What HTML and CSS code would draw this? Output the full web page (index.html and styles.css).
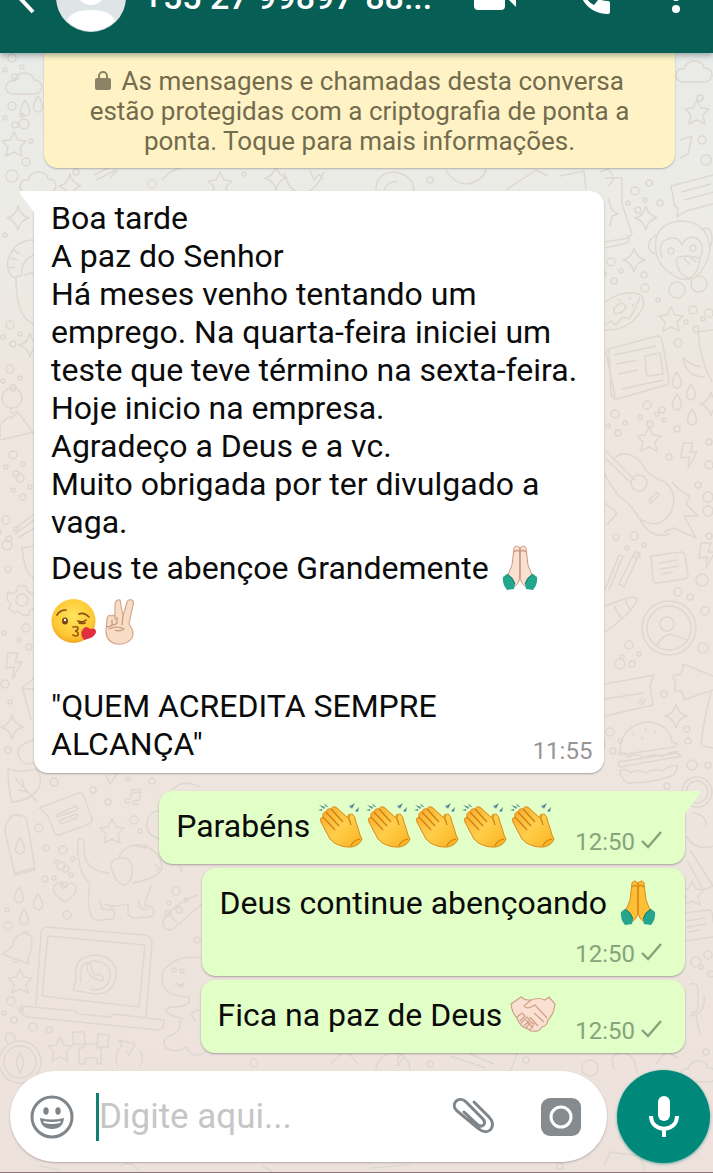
FILE: index.html
```html
<!DOCTYPE html>
<html lang="pt-BR">
<head>
<meta charset="UTF-8">
<meta name="viewport" content="width=device-width, initial-scale=1.0">
<title>Conversa</title>
<link rel="stylesheet" href="styles.css">
</head>
<body>
    <!-- Papel de parede -->
    <svg class="wallpaper" viewBox="0 0 713 1173" preserveAspectRatio="xMidYMid slice" aria-hidden="true">
        <defs>
            <path id="star" d="M0-12l4 8 8 1-6 6 2 9-8-4-8 4 2-9-6-6 8-1z"/>
            <path id="spark" d="M0-12q2 9 11 12q-9 2-11 12q-2-9-11-12q9-2 11-12z"/>
            <path id="cloud" d="M-12 10q-7-2-6-8q2-6 8-5q3-9 12-8q7 1 8 7q8 0 8 8q-2 6-8 6z"/>
            <path id="drop" d="M0-8q9 14 0 16q-9-2 0-16z"/>
            <path id="heart" d="M0 10q-14-9-11-16q6-7 11 1q6-7 11-1q2 8-11 16z"/>
            <path id="bolt" d="M-5-13l10 0-3 9 7 0-9 16 1-11-8 1z"/>
            <path id="note" d="M-17-12l30-4q3 0 4 3l3 20q0 3-3 4l-28 4q-4 0-4-4zM-9-5l19-3M-8 1l19-3M-7 6l12-2"/>
            <g id="dots"><circle r="4"/><circle cx="10" cy="9" r="2"/><circle cx="-7" cy="12" r="2"/><circle cx="3" cy="19" r="3"/></g>
            <path id="chat" d="M-26-10l46-12q6 0 7 5l4 17q0 4-4 5l-38 10-9 6 1-9q-4-1-4-6zM-16-4l30-8M-13 4l30-8"/>
        </defs>
        <!-- lado esquerdo -->
        <use href="#dots" x="12" y="58"/><use href="#cloud" x="24" y="84"/>
        <use href="#dots" x="12" y="106"/><use href="#drop" x="25" y="108"/><use href="#drop" x="38" y="104"/>
        <use href="#star" x="14" y="144"/><circle cx="31" cy="141" r="2"/><circle cx="24" cy="124" r="5"/>
        <circle cx="12" cy="176" r="6"/><circle cx="26" cy="162" r="4"/><use href="#cloud" x="38" y="183"/>
        <use href="#spark" x="70" y="186"/><use href="#spark" x="18" y="218"/><circle cx="5" cy="235" r="2"/>
        <path d="M34 240q-20 0-26 20q-2 12 6 18l8-3q-2-14 12-20M10 258l8 2M13 250l7 4M8 268l7-1M16 278q0 40 18 46M24 275q10-4 10 0"/>
        <use href="#dots" x="10" y="325"/><use href="#spark" x="30" y="345"/><use href="#dots" x="10" y="369"/>
        <circle cx="12" cy="398" r="10"/><path d="M0 440l0-14q8-12 12-8l6-6 16 22M0 440l34-8M10 408l2 6 5-4"/>
        <use href="#dots" x="13" y="455"/><use href="#dots" x="20" y="478"/><use href="#dots" x="6" y="520"/>
        <path d="M16 528l18-14M15 534l19-14M18 538l16-10M22 548l12-2M22 546q2 28 12 32"/>
        <circle cx="7" cy="545" r="5"/><circle cx="8" cy="569" r="3"/>
        <circle cx="22" cy="600" r="6"/><path d="M18 586h8l1 5 5 3 2 0M18 586l-1 5-5 3-4-2-1 8 4 3-2 6 6 4 3-2 4 4h7l1-5 4-1"/>
        <use href="#dots" x="26" y="628"/><circle cx="4" cy="633" r="2"/><use href="#bolt" x="13" y="666"/>
        <path d="M34 678l-13 11 13 0M23 690l8 30"/><circle cx="5" cy="684" r="4"/><circle cx="10" cy="702" r="2"/>
        <use href="#spark" x="12" y="727"/><circle cx="8" cy="750" r="3"/><path d="M34 740q-18 5-16 15q5 12 16 8"/>
        <path d="M8 769q14 4 28 0q8 10 2 20q-8 12-26 13q-4-14-4-33zM15 778l22 24M24 787l-2-8M28 792l-10-2M34 798l3 3"/>
        <circle cx="54" cy="782" r="4"/><circle cx="93" cy="790" r="3"/><circle cx="108" cy="802" r="3"/><circle cx="128" cy="779" r="2"/><circle cx="152" cy="781" r="3"/>
        <path d="M39 808l40-15q4 0 5 4l8 22q0 4-3 5l-30 11q-4 0-5-3l-6-16zM56 815l20-9q3 1 1 4l-20 7zM59 821l17-7q3 1 1 4l-16 6z"/>
        <path d="M130 800l2-10 9-1-2 12M132 793l8-1M129 799a3 2 0 1 0 1 3M138 801a3 2 0 1 0 1 2M106 775l4 9 8-12"/>
        <use href="#star" x="112" y="831"/><circle cx="134" cy="820" r="4"/><circle cx="140" cy="831" r="2"/>
        <path d="M160 811q-12 0-13 12q-2 12 13 16M172 790q10-12 28-3"/>
        <path d="M9 820q7-10 17-2q3 12 9 52l-20 5q-6-26-10-44q0-8 4-11zM10 820q-2-5 5-5q6 0 5 3M15 873l20-5"/><use href="#drop" x="20" y="846"/>
        <circle cx="39" cy="828" r="4"/><use href="#dots" x="63" y="850"/><circle cx="46" cy="848" r="3"/><use href="#dots" x="61" y="866"/>
        <path d="M78 840q6-4 6 4q-2 28 26 29M78 840q-2 30 12 44q-4 20 2 34q6 4 16 1q8 2 6-8q-4-6-7-7M107 874M100 900l2 9 12 1M104 904q10 4 24 0l0 10q4 6 14 3q12 2 12-6q-2-6-9-5q-2-2 7-21M138 900l2 8 8 2"/>
        <path d="M111 867q0-8 8-9q14-2 13 14q0 10-7 13q-9 0-14-18M119 857q6-14 24-12q18 6 19 24q-6 10-30 14M135 846l12 2M155 864l3 3M145 861l1 1M156 871l4-3"/>
        <use href="#drop" x="19" y="895"/><use href="#drop" x="38" y="902"/><use href="#drop" x="24" y="917"/>
        <use href="#heart" x="65" y="892"/><circle cx="45" cy="879" r="3"/><circle cx="67" cy="915" r="4"/><circle cx="8" cy="926" r="4"/><circle cx="7" cy="910" r="2"/>
        <path d="M2 954q12-6 12-14q6-10 17-4q2 4 0 14q-4 8-2 14zM22 932q5-2 7 3M12 960q2 4 5 1"/>
        <use href="#star" x="20" y="981"/><use href="#dots" x="11" y="1001"/><circle cx="33" cy="1027" r="4"/><circle cx="49" cy="1030" r="3"/>
        <path d="M36 1006l5-72q0-6 6-7l98 8q7 1 7 8l-6 74M42 996l6-60 97 9-6 62zM21 1006l55 5 2 3 33 3 2-3 51 6q0 10-6 10l-130-13q-8-1-7-11z"/>
        <path d="M73 990l3-10q-4-24 20-25q21 2 20 21q-4 22-27 17zM81 982q-4-20 14-21q17 2 15 17q-4 15-20 11M88 963q-4 14 14 18l2-3-5-4-3 1q-5-3-4-7l-2-5z"/>
        <circle cx="20" cy="1062" r="21"/><circle cx="20" cy="1062" r="16"/><path d="M20 1052l4 10-4 12-4-12zM7 1043q-4-10 4-10q6 2 3 8"/>
        <use href="#star" x="60" y="1049"/>
        <path d="M73 1032l11 0 1 12-12 0zM98 1034l11 1-1 12-11 0zM85 1044h12v4h4v16h-4v-6h-12v6h-6v-16h4zM118 1066a16 16 0 0 1 4-20l-3-6 16 4-6 11-3-4M140 1050a16 16 0 0 1 0 16"/>
        <path d="M164 918q16-18 34-23M172 930l30-26M164 918q-4 12 8 12M168 912l9 11M181 873q2-6-2-8"/>
        <use href="#dots" x="176" y="891"/><circle cx="168" cy="913" r="3"/><circle cx="197" cy="940" r="3"/>
        <path d="M204 958q-30-4-41 14q-6 24 26 25q4 10-18 10q-10 4 0 8l12 4M176 983q6 4 8 0q-1 8-8 0M200 1010q-14 2-4 11M180 1020q2 12-10 16q-10 4-4 12q10 6 20-1q8 14 20 4"/><circle cx="174" cy="970" r="2"/><circle cx="182" cy="971" r="2"/>
        <!-- abaixo do aviso -->
        <path d="M94 175l14-7M96 180l20-10M110 178l8-8M162 180l8-8 16-6M284 172q4 20 20 22q14-6 20-22M310 170l4 10 5-6 4 5M376 190q0-18 20-18q18 4 18 20M384 190q4-10 14-8M446 170q8 14 22 14q16-4 18-15M506 190l30-20 12 6M560 176l24-5 2 18M600 172l8-3q10 10 0 17"/>
        <circle cx="76" cy="172" r="3"/><circle cx="152" cy="184" r="4"/><circle cx="244" cy="174" r="2"/><circle cx="430" cy="180" r="3"/><use href="#spark" x="276" y="178"/><use href="#star" x="220" y="184"/>
        <!-- lado direito -->
        <use href="#cloud" x="694" y="72"/><circle cx="700" cy="98" r="3"/><use href="#star" x="697" y="112"/><path d="M680 140l12-4-4 18-8 4"/><circle cx="702" cy="140" r="4"/><circle cx="706" cy="160" r="5"/>
        <use href="#dots" x="635" y="191"/><circle cx="649" cy="183" r="3"/><circle cx="660" cy="203" r="3"/><use href="#chat" x="697" y="196"/>
        <path d="M605 178l17 0 0 26 10 30-4 4-23 4M605 248l22-5q4-4 0-8M608 198l4 12 6 4-6 2-2 10"/>
        <use href="#spark" x="646" y="218"/><use href="#spark" x="634" y="260"/>
        <path d="M656 252q-4-28 24-31q28 0 30 28q-2 16-14 28q-14 6-24-3q-14-8-16-22M657 235q-10 4-8 14q4 6 7 4M701 230q10-6 11 8q0 8-3 10M662 258q-6-18 10-20q8 0 10 7q4-10 14-7q10 6 4 20M676 260q2-4 12-4l12 2q-2 18-12 20q-10-4-12-18M684 258l6 7M689 256l7 6"/>
        <circle cx="671" cy="251" r="3"/><circle cx="693" cy="248" r="3"/><circle cx="677" cy="290" r="8"/><circle cx="699" cy="284" r="8"/>
        <use href="#dots" x="611" y="262"/><circle cx="644" cy="275" r="3"/><circle cx="645" cy="288" r="4"/><circle cx="658" cy="300" r="2"/>
        <path d="M605 302q20-14 36-7q8 10-8 26q-12 10-28 9M605 325l6-4 4 4 8-8 6 2 6-10 5-12M614 308q8-8 12-2q-2 8-12 8zM618 299l3 2M628 299l3-1M632 307l2-3"/>
        <use href="#star" x="671" y="319"/><use href="#dots" x="693" y="310"/><circle cx="709" cy="313" r="4"/><circle cx="678" cy="343" r="4"/>
        <path d="M609 349l48-13q4 0 5 4l7 40q0 4-3 5l-49 14q-5 0-6-5zM609 349q-4 1-2 8l8 40M614 355l42-9M616 364l22-4M618 374l20-4M622 389l41-9M645 356l15-3 3 21-14 2q-3 0-3-4z"/>
        <path d="M713 330l-15 2q2 28 14 50M701 367q-12-2-18-10q2 20 22 20"/>
        <use href="#drop" x="677" y="380"/><use href="#drop" x="691" y="392"/><use href="#drop" x="677" y="402"/><use href="#drop" x="692" y="417"/>
        <use href="#dots" x="647" y="405"/><use href="#dots" x="615" y="414"/><circle cx="662" cy="410" r="3"/><circle cx="664" cy="420" r="2"/><use href="#spark" x="711" y="404"/>
        <use href="#star" x="649" y="439"/><use href="#bolt" x="688" y="456"/><circle cx="669" cy="457" r="3"/><circle cx="677" cy="429" r="3"/><circle cx="709" cy="442" r="3"/><circle cx="709" cy="465" r="4"/>
        <path d="M605 450l30 30M605 458l27 26M615 458q10-10 26 4q6 14 24 20q14 12 6 30q-12 20-32 6q-8-14-20-22q-10-12-14-22M649 500l8-8 2 3-8 8zM672 482q8 10 18 14l-4 8 12 12-14 0 12 22-22-10-10 4M640 520q12 20 30 14"/><circle cx="639" cy="483" r="8"/>
        <circle cx="708" cy="497" r="5"/><circle cx="708" cy="511" r="5"/><circle cx="698" cy="485" r="3"/><circle cx="709" cy="536" r="3"/><use href="#dots" x="634" y="536"/><circle cx="616" cy="537" r="3"/>
        <path d="M605 590l14-35 4 1-14 34M619 584l16-32 4 2-15 33zM605 503l12 10-10 12"/>
        <use href="#note" x="668" y="568"/><circle cx="702" cy="580" r="6"/><circle cx="678" cy="592" r="4"/><circle cx="690" cy="597" r="3"/><use href="#bolt" x="706" y="556"/>
        <path d="M605 606l22-8q10-2 10 2q-4 12-32 32M625 599q2 8 6 10M614 606l7 12"/>
        <circle cx="669" cy="628" r="27"/><circle cx="669" cy="628" r="22"/><circle cx="667" cy="624" r="7"/><path d="M656 646q10-16 20-10q10 2 12 6"/>
        <circle cx="705" cy="611" r="4"/><circle cx="703" cy="648" r="5"/><circle cx="620" cy="664" r="5"/><use href="#dots" x="629" y="645"/>
        <path d="M605 684l49-9-4 10 3 20-48 11M605 699l38-6M637 704l6-6M641 705l5-6"/>
        <path d="M713 676l-30-12q0 10-4 11-10-2-3 7-2 2-1 10 6-4 8 2 2 4 0 6l30-10M711 692q-8 30-10 54M703 746l10 2"/>
        <circle cx="664" cy="694" r="3"/><use href="#spark" x="676" y="716"/><circle cx="687" cy="729" r="3"/><circle cx="688" cy="741" r="3"/><use href="#dots" x="610" y="732"/>
        <path d="M620 748q4-24 28-26q22 2 24 20l6 2-4 3-54 8zM618 754q8-4 10 3q10-5 16 1q12-6 18-1q8-6 16-5M618 762l58-9 6 3-62 11zM620 770q8-2 10 3q8-5 16 0q8-6 16-2q8-6 16-5l-4 9q-20 8-46 8q-8-4-8-13M632 733l2 2M645 728l2 3M656 730l-2 3M642 737l1 3"/>
        <circle cx="692" cy="765" r="5"/><circle cx="708" cy="765" r="3"/><circle cx="697" cy="792" r="15"/><circle cx="697" cy="792" r="11"/><circle cx="667" cy="786" r="3"/>
        <path d="M692 812q16 4 14 14M686 836q10 16 27 10M690 850l23 36-10 4-16-30"/><use href="#star" x="692" y="893"/><use href="#note" x="695" y="926"/><circle cx="696" cy="962" r="5"/><use href="#dots" x="708" y="955"/><path d="M690 984q8-2 8 6v18q-2 6-8 5M704 996q2 18-14 20M696 1016l4 18"/><circle cx="706" cy="1052" r="3"/>
        <!-- rodapé -->
        <path d="M330 1064l16-14 12 14M376 1070a10 10 0 1 1 34 0M400 1066q-6-10 4-12M396 1066q12-10 4-14M450 1056l36 12M470 1054l24 10M510 1072l8-20M614 1070l-2-12q12-12 22 2l4 14M656 1064l10-12 12 6M604 1166l6-14 30 4 5 14M40 1166l20 4M120 1166q12-6 18 4M262 1166l10 5M370 1168l40-3"/>
        <use href="#cloud" x="698" y="1072"/><circle cx="590" cy="1068" r="8"/><circle cx="254" cy="1063" r="4"/><circle cx="430" cy="1064" r="3"/><circle cx="526" cy="1060" r="3"/><circle cx="560" cy="1166" r="3"/>
    </svg>

    <!-- Desenhos dos emojis e gradientes -->
    <svg class="sprite" aria-hidden="true">
        <defs>
            <radialGradient id="gold" cx=".5" cy=".4" r=".65"><stop offset="0" stop-color="#ffe45e"/><stop offset=".7" stop-color="#fdc832"/><stop offset="1" stop-color="#f29a22"/></radialGradient>
            <linearGradient id="hand" x1="0" y1="0" x2="1" y2="1"><stop offset="0" stop-color="#f9a825"/><stop offset=".5" stop-color="#ffcf4a"/><stop offset="1" stop-color="#fbb01f"/></linearGradient>
            <symbol id="clap" viewBox="0 0 48 48">
                <path d="M16 9l13 8q0-6 4-5q4 8 6 16l-8 8z" fill="#eda22b"/>
                <path d="M3 20q-2-4 2-5q-1-5 3-5q1-4 5-3q2-4 6-1l12 11q0-5 3-5q3 1 4 8q3 9 4 13l2 4q-2 6-10 8q-14 1-22-8z" fill="url(#hand)" stroke="#d98a1c"/>
                <path d="M5 15l12 13M8 10l13 14M13 7l12 13M31 17l2 6M33 44q1-5 9-7" fill="none" stroke="#ce7d19" stroke-width="1.2"/>
                <path d="M1 3l5 4 1-2zM6 1l2 4 2 0zM0 8l4 1 0-2zM37 1l-3 6-2-3zM41 5l-4 4 3 1zM31 3l1 3 1-1z" fill="#5b8a9d"/>
            </symbol>
            <symbol id="pray" viewBox="0 0 48 48">
                <path d="M23 4q-4-4-6 0l-2 17-6 15 8 7q5-3 6-9z" fill="var(--skin)" stroke="var(--line)"/>
                <path d="M23 4q4-4 6 0l2 17 6 15-8 7q-5-3-6-9z" fill="var(--skin)" stroke="var(--line)"/>
                <path d="M23 4v30M17 8q3-3 6 0q3-3 6 0" fill="none" stroke="var(--line)" stroke-width="1.5"/>
                <path d="M6 33l4-3q6 3 8 10l-1 5-7 1q-5-6-4-13zM40 33l-4-3q-6 3-8 10l1 5 7 1q5-6 4-13z" fill="#24a58e"/>
                <path d="M10 30q6 3 8 10M36 30q-6 3-8 10" fill="none" stroke="#14796b"/>
            </symbol>
            <symbol id="kiss" viewBox="0 0 48 48">
                <circle cx="22.5" cy="23" r="22" fill="url(#gold)"/>
                <path d="M6 17q3-5 9-5M28 16q5-2 10 3M27 23q5 2 8-1M28 25q4 1 6 0" fill="none" stroke="#8a4f12" stroke-width="1.7" stroke-linecap="round"/>
                <ellipse cx="14" cy="23" rx="3" ry="3.5" fill="#7c4411"/><circle cx="14" cy="22" r="1.2" fill="#fff"/>
                <path d="M22 29q6-1 5 2q-1 2-3 2q4 1 3 4q-2 2-5 0" fill="none" stroke="#9c5413" stroke-width="1.7" stroke-linecap="round"/>
                <path d="M33 42q-5-6-1-11q3-4 7 0q6-2 6 3q0 5-12 8z" fill="#e22f3f"/>
            </symbol>
            <symbol id="peace" viewBox="0 0 48 48">
                <path d="M16 22l0-16q1-5 5-4l3 16 4-14q2-4 6-1q1 1 0 4l-4 19q6 8 3 14q-5 7-15 6q-11-2-11-13l1-12q1-5 5-3q2-2 3 1z" fill="#f9dcc6" stroke="#d3a78c" stroke-width="1.2"/>
                <path d="M13 22v5q-3 3-6 1M18 19v6q-3 3-5 1M10 31q8-4 15 0q-5 3-9 1M24 18l-1 9" fill="none" stroke="#c6957b" stroke-width="1.2"/>
            </symbol>
            <symbol id="shake" viewBox="0 0 48 48">
                <path d="M1 13l10-7q5 4 10 3q8-3 14 0l4-3 6 7q-1 10-7 16q-1 6-6 7q-3 5-8 4q-3 1-6-2q-8-2-11-11q-5-5-6-14z" fill="#fae0d0" stroke="#cf9f88" stroke-width="1.2"/>
                <path d="M21 9l-7 6q3 4 11-1l12 13M24 22l10 9M20 26l8 9M16 29l7 8M7 26l5-4 3 3-5 5M11 32l6-6 3 3-6 6M16 37l5-6 3 2-4 6" fill="none" stroke="#cf9f88" stroke-width="1.2"/>
            </symbol>
            <symbol id="check" viewBox="0 0 22 20"><path d="M1 11l6 6L20 2" fill="none" stroke="#88a37b" stroke-width="2.4"/></symbol>
        </defs>
    </svg>

    <header class="topbar">
        <div class="topbar-row">
            <button class="back" aria-label="Voltar">
                <svg width="56" height="40" viewBox="0 0 56 40"><path d="M33 5L19 20l14 15" fill="none" stroke="#fff" stroke-width="4"/></svg>
            </button>
            <svg class="avatar" viewBox="0 0 70 70" aria-hidden="true">
                <circle cx="35" cy="35" r="35" fill="#dfe5e7"/>
                <circle cx="35" cy="29" r="14" fill="#fff"/>
                <path d="M11 59q4-11 24-11t24 11a34 34 0 0 1-48 0z" fill="#fff"/>
            </svg>
            <h1>+55 27 99897-88...</h1>
            <button class="action" aria-label="Chamada de vídeo">
                <svg width="42" height="28" viewBox="0 0 42 28" fill="#fff"><rect width="31" height="27" rx="4"/><path d="M31 13l11-10v21z"/></svg>
            </button>
            <button class="action" aria-label="Ligar">
                <svg width="36" height="36" viewBox="0 0 36 36" fill="#fff"><path d="M2 0h7q2 0 2 2q0 4 2 8q0 2-1 3l-4 4q3 6 9 9l4-5q1-1 3 0q4 1 7 1q2 0 2 2v9q0 2-2 2Q4 34 0 2q0-2 2-2z"/></svg>
            </button>
            <button class="more" aria-label="Mais opções">
                <svg width="10" height="34" viewBox="0 0 10 34" fill="#fff"><circle cx="5" cy="5" r="4"/><circle cx="5" cy="17" r="4"/><circle cx="5" cy="29" r="4"/></svg>
            </button>
        </div>
    </header>

    <main class="chat">
        <p class="notice"><svg class="lock" viewBox="0 0 16 20" aria-hidden="true"><path d="M4 9V6a4 4 0 0 1 8 0v3" fill="none" stroke="#8b8367" stroke-width="2"/><rect x="0" y="8" width="16" height="12" rx="2" fill="#8b8367"/></svg> As mensagens e chamadas desta conversa estão protegidas com a criptografia de ponta a ponta. Toque para mais informações.</p>

        <article class="bubble received">
            <svg class="tail" viewBox="0 0 16 24" aria-hidden="true"><path d="M0 0h16v24L1 4Q-1 1 0 0z" fill="#fff"/></svg>
            <div class="text">
                <p>Boa tarde</p>
                <p>A paz do Senhor</p>
                <p>Há meses venho tentando um emprego. Na quarta-feira iniciei um teste que teve término na sexta-feira.</p>
                <p>Hoje inicio na empresa.</p>
                <p>Agradeço a Deus e a vc.</p>
                <p>Muito obrigada por ter divulgado a vaga.</p>
                <p>Deus te abençoe Grandemente <svg class="emoji light" role="img" aria-label="mãos postas"><use href="#pray"/></svg><svg class="emoji" role="img" aria-label="beijo"><use href="#kiss"/></svg><svg class="emoji" role="img" aria-label="paz"><use href="#peace"/></svg></p>
                <br>
                <p>"QUEM ACREDITA SEMPRE ALCANÇA"</p>
            </div>
            <time>11:55</time>
        </article>

        <article class="bubble sent first">
            <svg class="tail" viewBox="0 0 16 24" aria-hidden="true"><path d="M16 0H0v24L15 4Q17 1 16 0z" fill="#e1ffc7"/></svg>
            <p class="text">Parabéns <svg class="emoji" role="img" aria-label="palmas"><use href="#clap"/></svg><svg class="emoji" role="img" aria-label="palmas"><use href="#clap"/></svg><svg class="emoji" role="img" aria-label="palmas"><use href="#clap"/></svg><svg class="emoji" role="img" aria-label="palmas"><use href="#clap"/></svg><svg class="emoji" role="img" aria-label="palmas"><use href="#clap"/></svg></p>
            <time>12:50 <svg class="check"><use href="#check"/></svg></time>
        </article>

        <article class="bubble sent stacked">
            <p class="text">Deus continue abençoando <svg class="emoji" role="img" aria-label="mãos postas"><use href="#pray"/></svg></p>
            <time>12:50 <svg class="check"><use href="#check"/></svg></time>
        </article>

        <article class="bubble sent">
            <p class="text">Fica na paz de Deus <svg class="emoji" role="img" aria-label="aperto de mãos"><use href="#shake"/></svg></p>
            <time>12:50 <svg class="check"><use href="#check"/></svg></time>
        </article>
    </main>

    <footer class="composer">
        <div class="field">
            <button aria-label="Emojis">
                <svg width="44" height="44" viewBox="0 0 44 44"><circle cx="22" cy="22" r="20" fill="none" stroke="#7f868b" stroke-width="3"/><ellipse cx="16" cy="16" rx="2.7" ry="3.7" fill="#7f868b"/><ellipse cx="28" cy="16" rx="2.7" ry="3.7" fill="#7f868b"/><path d="M10 23q12 3 24 0q-1 11-12 11T10 23z" fill="#7f868b"/><path d="M13 26q9 2 18 0l-1 2q-8 2-16 0z" fill="#fff"/></svg>
            </button>
            <input type="text" placeholder="Digite aqui..." aria-label="Mensagem">
            <button class="attach" aria-label="Anexar">
                <svg width="44" height="44" viewBox="0 0 44 44"><path d="M23 5l15 15c9 9-1 20-10 12L6 14C-1 7 7-1 14 4l18 18c4 5-1 9-5 6L13 15" fill="none" stroke="#7f868b" stroke-width="3" stroke-linecap="round" transform="translate(0 2)"/></svg>
            </button>
            <button aria-label="Câmera">
                <svg width="44" height="44" viewBox="0 0 44 44"><rect x="2" y="3" width="40" height="38" rx="9" fill="#868b90"/><circle cx="22" cy="22" r="10" fill="none" stroke="#fff" stroke-width="3"/></svg>
            </button>
        </div>
        <button class="mic" aria-label="Gravar áudio">
            <svg width="30" height="42" viewBox="0 0 30 42"><rect x="9" y="0" width="12" height="25" rx="6" fill="#fff"/><path d="M2 20c0 17 26 17 26 0M15 32v9" fill="none" stroke="#fff" stroke-width="4"/></svg>
        </button>
    </footer>
</body>
</html>
```
FILE: styles.css
```css
* {
    box-sizing: border-box;
}

body {
    margin: 0;
    min-height: 100vh;
    display: flex;
    flex-direction: column;
    font-family: Roboto, sans-serif;
    color: #0b0b0b;
    background: linear-gradient(#e9ebe8 60px, #ecebe6 220px, #eee6df 380px, #eee5de 800px, #ede1dc);
    border-bottom: 1px solid #8b7378;
}

h1, p {
    margin: 0;
}

button {
    padding: 0;
    border: 0;
    background: none;
    display: flex;
    align-items: center;
    justify-content: center;
    cursor: pointer;
}

.wallpaper {
    position: absolute;
    z-index: -1;
    top: 0;
    left: 0;
    width: 100%;
    height: 100%;
    fill: none;
    stroke: #ded8d1;
    stroke-width: 1.5;
    stroke-linejoin: round;
}

.sprite {
    position: absolute;
    width: 0;
    height: 0;
}

/* Barra superior: a linha fica parcialmente rolada para fora */
.topbar {
    height: 53px;
    overflow: hidden;
    display: flex;
    align-items: flex-end;
    background-color: #075e54;
    box-shadow: 0 2px 6px rgba(0, 40, 50, 0.4);
    position: relative;
    z-index: 1;
}

.topbar-row {
    flex: 1;
    min-width: 0;
    height: 112px;
    display: flex;
    align-items: center;
    padding-right: 6px;
}

.avatar {
    width: 70px;
    height: 70px;
    flex: none;
}

h1 {
    flex: 1;
    padding-left: 18px;
    font-size: 34px;
    line-height: 42px;
    font-weight: 500;
    color: #fff;
    white-space: nowrap;
}

.action {
    width: 100px;
}

.more {
    width: 62px;
}

/* Conversa */
.chat {
    display: flex;
    flex-direction: column;
    align-items: flex-end;
    gap: 4px;
    padding: 0 28px 17px 34px;
}

.notice {
    align-self: stretch;
    margin: 0 10px 19px;
    padding: 13px 30px 12px;
    border-radius: 0 0 14px 14px;
    background-color: #fff3c5;
    box-shadow: 0 1px 2px rgba(0, 0, 0, 0.25);
    color: #736b4e;
    font-size: 26px;
    line-height: 30px;
    text-align: center;
}

.lock {
    width: 16px;
    height: 20px;
    margin-right: 4px;
}

.bubble {
    position: relative;
    padding: 8px 22px 8px 17px;
    border-radius: 14px;
    box-shadow: 0 1px 2px rgba(0, 0, 0, 0.3);
    font-size: 32px;
    line-height: 38px;
}

.received {
    align-self: flex-start;
    width: 80vw;
    display: grid;
    padding-right: 12px;
    border-top-left-radius: 0;
    margin-bottom: 14px;
    background-color: #fff;
}

.received .text,
.received time {
    grid-area: 1 / 1;
}

.received .text {
    padding: 0 4px 2px 0;
}

.received time {
    align-self: end;
    justify-self: end;
    color: #969696;
}

.sent {
    display: flex;
    justify-content: flex-end;
    gap: 17px;
    background-color: #e1ffc7;
}

.sent .text {
    padding-bottom: 3px;
}

.first {
    border-top-right-radius: 0;
}

.stacked {
    flex-direction: column;
    gap: 7px;
}

.tail {
    position: absolute;
    top: 0;
    width: 16px;
    height: 24px;
}

.received .tail {
    left: -14px;
}

.sent .tail {
    right: -15px;
}

time {
    align-self: flex-end;
    font-size: 24px;
    line-height: 28px;
    color: #88a37b;
    white-space: nowrap;
}

.check {
    width: 22px;
    height: 20px;
}

.emoji {
    --skin: #fdbf35;
    --line: #dd8a1b;
    width: 48px;
    height: 54px;
    vertical-align: -16px;
}

.light {
    --skin: #fae0d0;
    --line: #cb9a84;
}

/* Campo de mensagem */
.composer {
    margin-top: auto;
    display: flex;
    align-items: center;
    gap: 10px;
    padding: 0 3px 9px 10px;
}

.field {
    flex: 1;
    min-width: 0;
    height: 91px;
    display: flex;
    align-items: center;
    padding: 0 24px 0 20px;
    border-radius: 46px;
    background-color: #fff;
    box-shadow: 0 1px 2px rgba(0, 0, 0, 0.25);
}

input {
    flex: 1;
    min-width: 0;
    height: 48px;
    margin-left: 22px;
    padding: 0;
    border: 0;
    border-left: 3px solid #128070;
    outline: none;
    background: none;
    font: 35px Roboto, sans-serif;
}

input::placeholder {
    color: #c6c6c6;
    opacity: 1;
}

.attach {
    margin-right: 44px;
}

.mic {
    width: 93px;
    height: 93px;
    border-radius: 50%;
    background-color: #00897b;
    box-shadow: 0 1px 3px rgba(0, 137, 123, 0.6);
}
```
